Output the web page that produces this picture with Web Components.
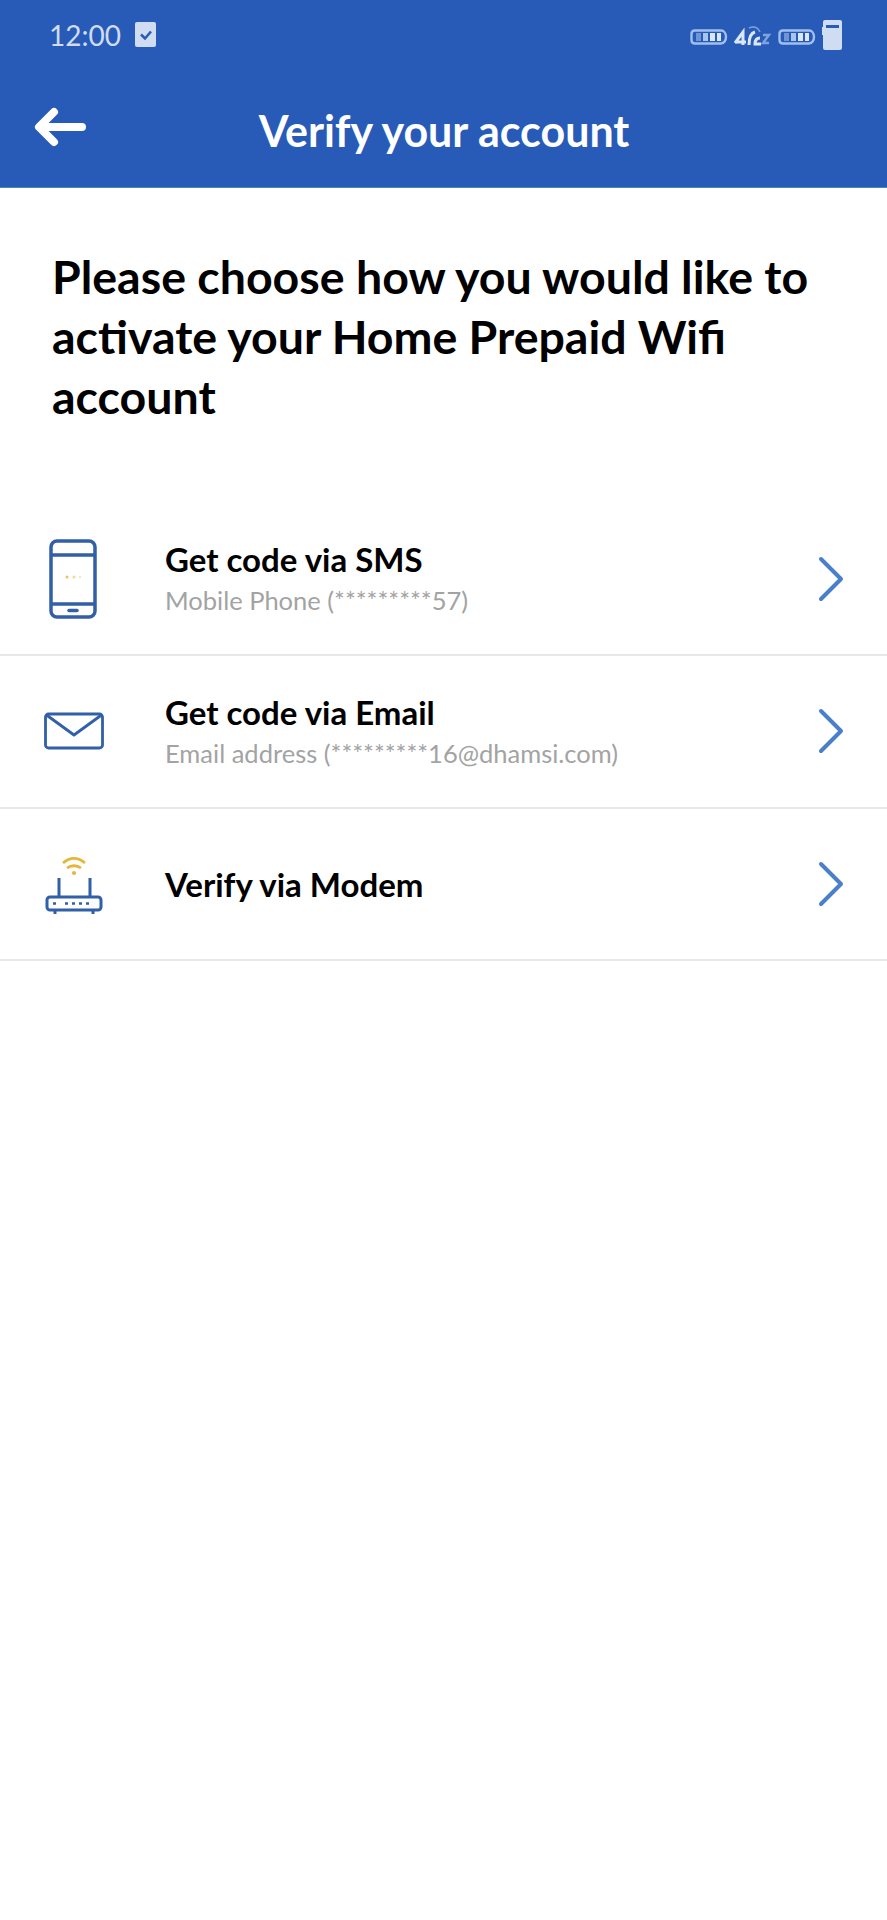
<!DOCTYPE html>
<html>
<head>
<meta charset="utf-8">
<title>Verify your account</title>
<style>
    html, body { margin: 0; background: #fff; }
    body { font-family: "Lato", "Open Sans", sans-serif; width: 887px; height: 1920px; overflow: hidden; }
</style>
</head>
<body>
<app-bar heading="Verify your account"></app-bar>
<intro-text>Please choose how you would like to activate your Home Prepaid Wifi account</intro-text>
<option-list>
    <verify-option icon="phone" sub="Mobile Phone (*********57)">Get code via SMS</verify-option>
    <verify-option icon="mail" sub="Email address (*********16@dhamsi.com)">Get code via Email</verify-option>
    <verify-option icon="modem">Verify via Modem</verify-option>
</option-list>

<script>
// Barra azul do topo: status + titulo
class AppBar extends HTMLElement {
    constructor() {
        super();
        this.attachShadow({ mode: 'open' });
    }

    connectedCallback() {
        const battery = `<svg class="batt" width="38" height="16" viewBox="0 0 38 16" fill="none">
            <path d="M5 1.500h26c3 0 5 3 5 6.500s-2 6.500-5 6.500H5c-2 0-3.500-1.500-3.500-3.500v-6C1.500 3 3 1.500 5 1.500z" stroke="#9fc0ee" stroke-width="2.400"/>
            <rect x="6" y="4" width="5" height="8" fill="#6f96d4"/>
            <rect x="13" y="4" width="5" height="8" fill="#a9c4ea"/>
            <rect x="20" y="4" width="5" height="8" fill="#dbe6f7"/>
            <rect x="27" y="4" width="4" height="8" fill="#dbe6f7"/>
        </svg>`;

        this.shadowRoot.innerHTML = `
            <style>
                :host {
                    display: block;
                    height: 188px;
                    box-sizing: border-box;
                    background: #285bb7;
                    border-bottom: 1px solid #4f86b8;
                    color: #fff;
                }
                .status {
                    height: 50px;
                    padding: 20px 45px 0 49px;
                    box-sizing: border-box;
                    display: flex;
                    align-items: center;
                    color: #cfdcf2;
                }
                .time { font-size: 28px; margin-right: 14px; }
                .spacer { flex: 1; }
                .icons { display: flex; align-items: center; gap: 6px; }
                .batt { margin-top: 3px; }
                .signal { margin-top: 1px; }
                .title-row {
                    height: 137px;
                    display: flex;
                    align-items: center;
                    justify-content: center;
                    position: relative;
                    padding-top: 23px;
                    box-sizing: border-box;
                }
                .back { position: absolute; left: 33px; top: 57px; }
                h1 { margin: 0 0 0 1px; font-size: 43px; font-weight: 700; }
            </style>
            <div class="status">
                <span class="time">12:00</span>
                <svg width="22" height="26" viewBox="0 0 22 26">
                    <rect width="21" height="25" rx="2" fill="#cfdcf2"/>
                    <path d="M6 12.500l4 4 6-7" fill="none" stroke="#285bb7" stroke-width="2.500"/>
                </svg>
                <span class="spacer"></span>
                <div class="icons">
                    ${battery}
                    <svg class="signal" width="38" height="22" viewBox="0 0 38 22" fill="none">
                        <path d="M1 18L9 7v13M1 17h11" stroke="#dbe6f7" stroke-width="3"/>
                        <path d="M21 7c-4 1-6 6-6 13M26 13c-3 0-5 2-5 6h6" stroke="#dbe6f7" stroke-width="3"/>
                        <path d="M15 3c5-2 9 0 11 4" stroke="#7fa3dc" stroke-width="1.500"/>
                        <path d="M29 10h6l-6 8h6" stroke="#7fa3dc" stroke-width="2.400"/>
                    </svg>
                    ${battery}
                    <svg width="20" height="30" viewBox="0 0 20 30">
                        <path d="M3 0h15a2 2 0 0 1 2 2v26a2 2 0 0 1-2 2H3a2 2 0 0 1-2-2V15h-1V7h1V2a2 2 0 0 1 2-2z" fill="#cfdcf2"/>
                        <rect x="4" y="5" width="13" height="3" fill="#285bb7"/>
                    </svg>
                </div>
            </div>
            <div class="title-row">
                <svg class="back" width="54" height="40" viewBox="0 0 54 40" fill="none" stroke="#fff" stroke-width="8" stroke-linecap="round" stroke-linejoin="round">
                    <path d="M49 20H7M21 5L6 20l15 15"/>
                </svg>
                <h1>${this.getAttribute('heading')}</h1>
            </div>
        `;
    }
}

// Texto de instrucao abaixo da barra
class IntroText extends HTMLElement {
    constructor() {
        super();
        this.attachShadow({ mode: 'open' });
        this.shadowRoot.innerHTML = `
            <style>
                :host {
                    display: block;
                    padding: 58px 40px 0 52px;
                    height: 315.5px;
                    box-sizing: border-box;
                    font-size: 46.5px;
                    line-height: 60px;
                    font-weight: 700;
                    color: #000;
                }
            </style>
            <slot></slot>
        `;
    }
}

class OptionList extends HTMLElement {
    constructor() {
        super();
        this.attachShadow({ mode: 'open' });
        this.shadowRoot.innerHTML = `
            <style>
                :host { display: flex; flex-direction: column; }
            </style>
            <slot></slot>
        `;
    }
}

const ICONS = {
    phone: `<svg width="50" height="80" viewBox="0 0 50 80" fill="none" stroke="#315fa8" stroke-width="3.500">
        <rect x="3" y="2" width="44" height="76" rx="6"/>
        <path d="M3 16h44M3 65h44"/>
        <path d="M21 71.500h8" stroke-linecap="round"/>
        <circle cx="19" cy="38" r="1.500" fill="#e6c35c" stroke="none"/>
        <circle cx="26" cy="38" r="1.500" fill="#eedb9c" stroke="none"/>
        <circle cx="32" cy="38" r="1.200" fill="#f2e8c4" stroke="none"/>
    </svg>`,
    mail: `<svg width="60" height="38" viewBox="0 0 60 38" fill="none" stroke="#315fa8" stroke-width="2.800" stroke-linejoin="round">
        <rect x="1.500" y="2" width="57" height="34" rx="3"/>
        <path d="M2.500 3L30 23 57.500 3"/>
    </svg>`,
    modem: `<svg width="58" height="60" viewBox="0 0 58 60" fill="none">
        <path d="M18 9c7-6 15-6 22 0M22 14c4-3 10-3 14 0" stroke="#e6b63a" stroke-width="2.800"/>
        <circle cx="29" cy="19" r="2" fill="#e6b63a"/>
        <path d="M14 24v20M45 24v20" stroke="#315fa8" stroke-width="3"/>
        <rect x="2" y="43" width="54" height="13" rx="3" stroke="#315fa8" stroke-width="3"/>
        <path d="M10 56v4M48 56v4" stroke="#315fa8" stroke-width="3"/>
        <path d="M8 49.500h3M20 49.500h3M27 49.500h3M34 49.500h3M41 49.500h3" stroke="#315fa8" stroke-width="2.500"/>
    </svg>`
};

// Linha de opcao com icone, texto e seta
class VerifyOption extends HTMLElement {
    constructor() {
        super();
        this.attachShadow({ mode: 'open' });
    }

    connectedCallback() {
        const sub = this.getAttribute('sub');
        const icon = this.getAttribute('icon');

        this.shadowRoot.innerHTML = `
            <style>
                :host {
                    display: flex;
                    align-items: center;
                    height: 152.5px;
                    box-sizing: border-box;
                    border-bottom: 2px solid #e8e8e8;
                    padding-right: 43px;
                }
                .icon {
                    width: 165px;
                    box-sizing: border-box;
                    padding-left: 44px;
                    display: flex;
                    flex: none;
                }
                .text { flex: 1; }
                .name { font-size: 33px; line-height: 40px; font-weight: 700; color: #000; }
                .sub { font-size: 25.5px; line-height: 36px; color: #a3a3a3; margin-top: 3px; }
                .phone { padding-left: 48px; }
                .modem { padding-left: 45px; }
            </style>
            <div class="icon ${icon}">${ICONS[icon]}</div>
            <div class="text">
                <div class="name"><slot></slot></div>
                ${sub ? `<div class="sub">${sub}</div>` : ''}
            </div>
            <svg width="26" height="46" viewBox="0 0 26 46" fill="none" stroke="#4a7fca" stroke-width="4" stroke-linecap="round" stroke-linejoin="round">
                <path d="M3 3l20 20L3 43"/>
            </svg>
        `;
    }
}

customElements.define('app-bar', AppBar);
customElements.define('intro-text', IntroText);
customElements.define('option-list', OptionList);
customElements.define('verify-option', VerifyOption);
</script>
</body>
</html>
